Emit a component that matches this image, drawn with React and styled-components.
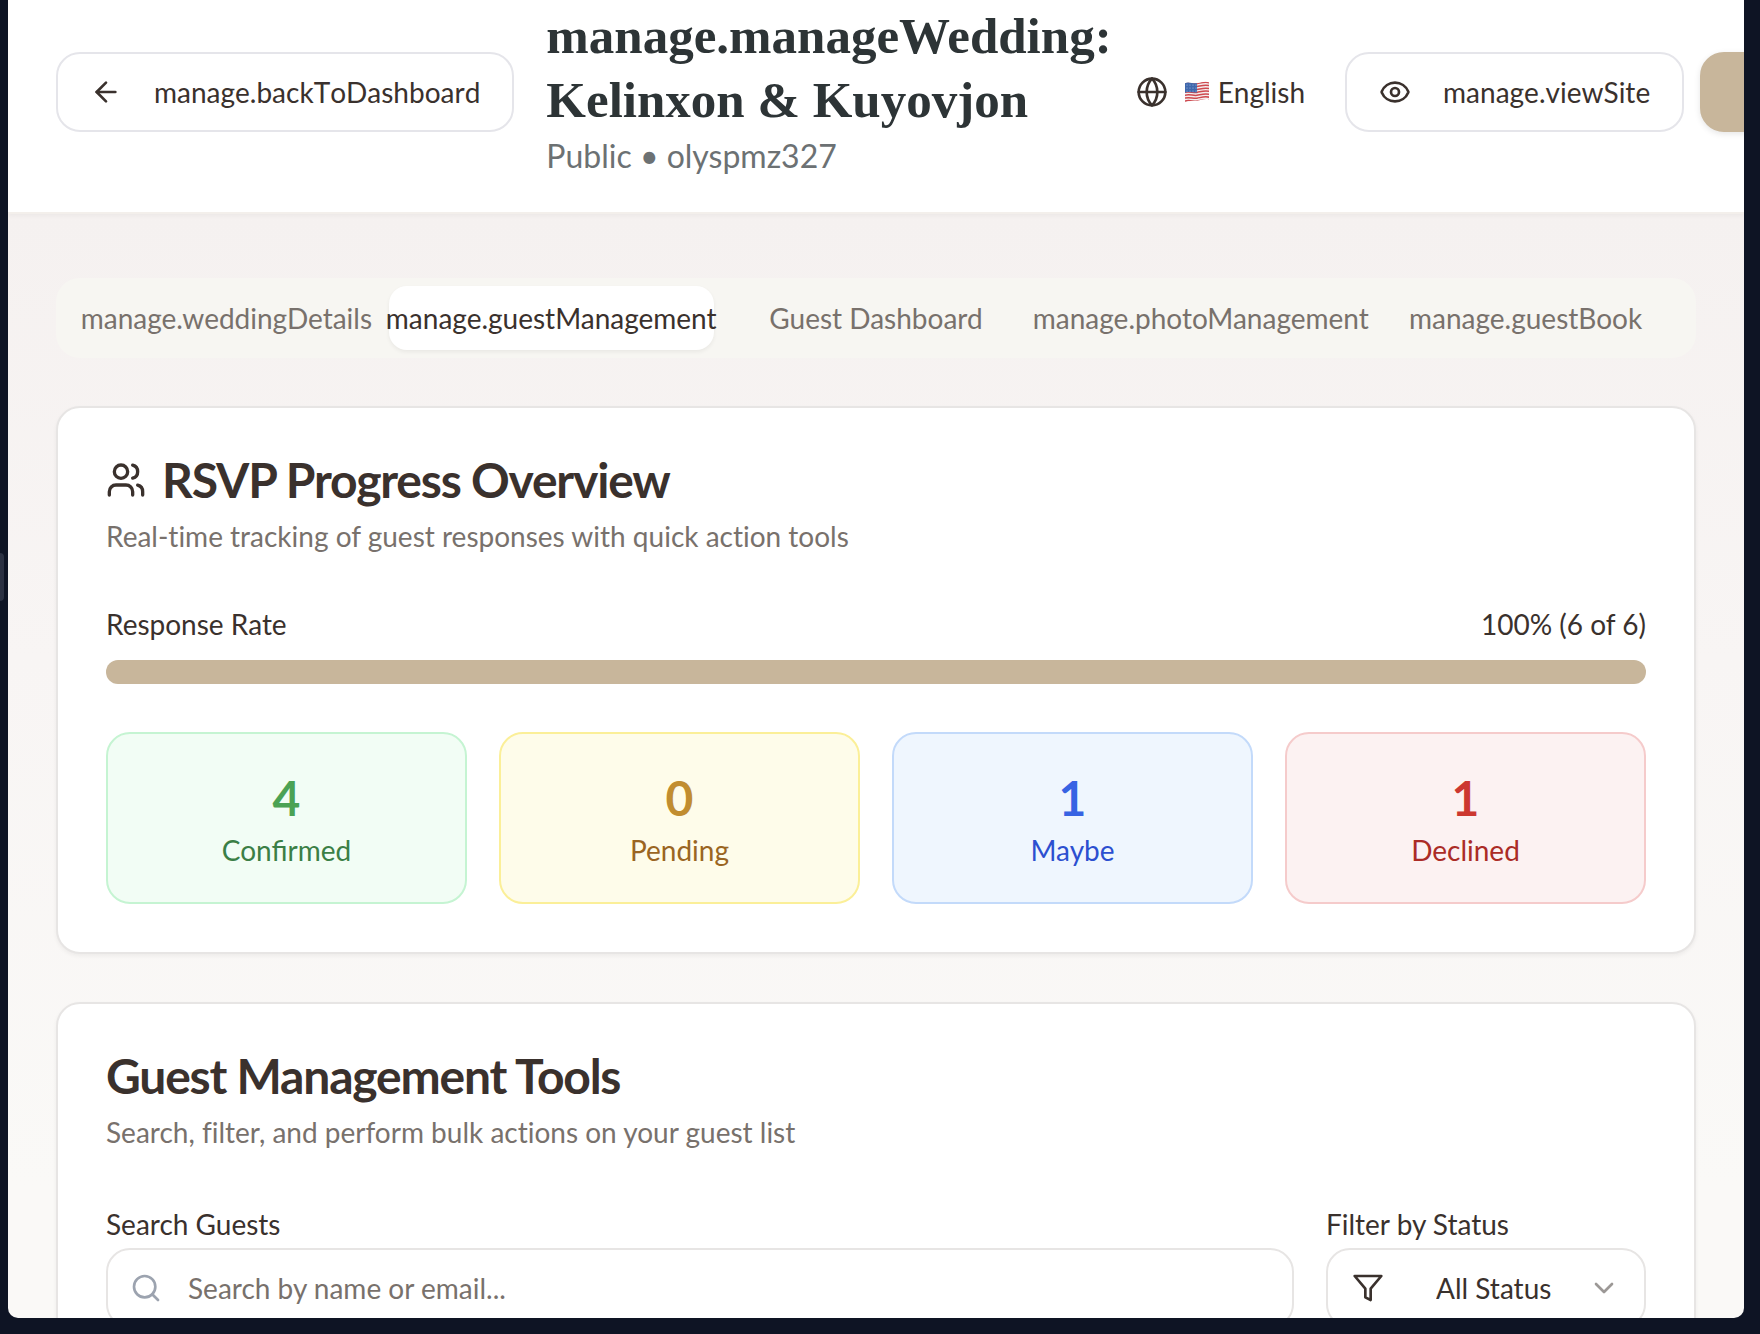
import React from "react";
import styled, { createGlobalStyle } from "styled-components";
import { ArrowLeft, ChevronDown, Eye, Globe, Search, Users } from "lucide-react";

const GlobalStyle = createGlobalStyle`
  *, *::before, *::after { box-sizing: border-box; }
  body {
    margin: 0;
    background: #0e1424;
    color: #3a312d;
    font-family: "Lato", sans-serif;
    font-size: 28px;
    line-height: 40px;
    -webkit-font-smoothing: antialiased;
  }
  h1, h2, p { margin: 0; }
  button, input, select { font: inherit; color: inherit; }
  svg { display: block; flex-shrink: 0; }
`;

const Desktop = styled.div`
  display: flex;
  align-items: center;
  height: 100vh;
  padding: 0 16px 16px 0;
  overflow: hidden;
`;

const PanelHandle = styled.div`
  width: 4px;
  height: 48px;
  margin: 0 4px 164px 0;
  flex-shrink: 0;
  border-radius: 0 4px 4px 0;
  background: #2b3142;
`;

const Viewport = styled.div`
  flex: 1;
  min-width: 0;
  height: 100%;
  overflow: hidden;
  border-radius: 0 0 10px 10px;
  background: linear-gradient(#f5f1f0 214px, #f8f5f4 50%, #faf9f7 90%);
`;

const Header = styled.header`
  display: flex;
  align-items: center;
  padding: 4px 48px 32px;
  background: #fff;
  border-bottom: 2px solid #f3efeb;
  box-shadow: 0 2px 4px rgba(0, 0, 0, 0.04);
`;

const Button = styled.button`
  display: inline-flex;
  align-items: center;
  flex-shrink: 0;
  gap: ${(p) => p.$gap || 32}px;
  height: 80px;
  padding: 0 ${(p) => (p.$ghost ? 24 : 32)}px;
  border: ${(p) => (p.$ghost ? "0" : "2px solid #e5e5ea")};
  border-radius: 24px;
  background: ${(p) => (p.$ghost ? "transparent" : "#fff")};
  white-space: nowrap;
  font-kerning: none;
`;

const PrimaryButton = styled(Button)`
  width: 240px;
  border-color: #c8b69b;
  background: #c8b69b;
  box-shadow: 0 2px 6px rgba(0, 0, 0, 0.1);
`;

const TitleBlock = styled.div`
  flex-shrink: 0;
  width: min-content;
  min-width: 565px;
  margin-left: 32px;
`;

const Title = styled.h1`
  font-family: "Liberation Serif", serif;
  font-size: 51px;
  font-weight: 700;
  line-height: 64px;
  color: #2d3436;
`;

const Subtitle = styled.p`
  font-size: 32px;
  line-height: 48px;
  color: #6c7173;
`;

const Actions = styled.div`
  display: flex;
  flex-shrink: 0;
  gap: 16px;
`;

const Language = styled.span`
  display: flex;
  align-items: center;
  gap: 8px;
`;

const Main = styled.main`
  display: grid;
  gap: 48px;
  padding: 64px 48px;
`;

const Tabs = styled.div`
  display: grid;
  grid-template-columns: repeat(5, minmax(0, 1fr));
  padding: 8px;
  border-radius: 24px;
  background: #f7f6f2;
`;

const Tab = styled.button`
  display: flex;
  align-items: center;
  justify-content: center;
  height: 64px;
  padding: 0;
  border: 0;
  border-radius: 18px;
  white-space: nowrap;
  color: ${(p) => (p.$active ? "#3a312d" : "#78716c")};
  background: ${(p) => (p.$active ? "#fff" : "transparent")};
  box-shadow: ${(p) => (p.$active ? "0 2px 4px rgba(0, 0, 0, 0.06)" : "none")};
`;

const Card = styled.section`
  padding: 48px;
  border: 2px solid #e7e5e4;
  border-radius: 24px;
  background: #fff;
  box-shadow: 0 2px 4px rgba(0, 0, 0, 0.05);
`;

const CardHeader = styled.div`
  display: grid;
  gap: 12px;
  padding-bottom: 48px;
`;

const CardTitle = styled.h2`
  display: flex;
  align-items: center;
  gap: 16px;
  font-size: 48px;
  font-weight: 700;
  line-height: 48px;
  letter-spacing: -0.025em;
`;

const Muted = styled.p`
  color: #78716c;
  font-variant-ligatures: no-common-ligatures;
`;

const RateRow = styled.div`
  display: flex;
  justify-content: space-between;
  margin-bottom: 16px;
`;

const Track = styled.div`
  height: 24px;
  border-radius: 12px;
  overflow: hidden;
  background: #f3efe9;
`;

const Fill = styled.div`
  height: 100%;
  background: #c8b69b;
`;

const Stats = styled.div`
  display: grid;
  grid-template-columns: repeat(4, 1fr);
  gap: 32px;
  margin-top: 48px;
`;

const Stat = styled.div`
  padding: 32px;
  border: 2px solid ${(p) => p.$border};
  border-radius: 24px;
  background: ${(p) => p.$bg};
  color: ${(p) => p.$label};
  text-align: center;
`;

const StatValue = styled.p`
  font-size: 48px;
  font-weight: 700;
  line-height: 64px;
  color: ${(p) => p.$color};
`;

const Filters = styled.div`
  display: flex;
  gap: 32px;
`;

const Field = styled.div`
  flex: ${(p) => (p.$wide ? "1" : "0 0 320px")};
`;

const Label = styled.label`
  display: block;
  line-height: 48px;
`;

const Control = styled.div`
  position: relative;
`;

const Adornment = styled.span`
  position: absolute;
  top: 24px;
  ${(p) => (p.$end ? "right" : "left")}: ${(p) => p.$inset || 26}px;
  color: ${(p) => p.$color || "inherit"};
  pointer-events: none;
`;

const TextInput = styled.input`
  display: block;
  width: 100%;
  height: 80px;
  padding: 0 24px 0 80px;
  border: 2px solid #e7e5e4;
  border-radius: 24px;
  background: #fff;
  &::placeholder { color: #78716c; opacity: 1; }
`;

const Select = styled.select`
  display: block;
  width: 100%;
  height: 80px;
  padding: 0 60px 0 108px;
  border: 2px solid #e7e5e4;
  border-radius: 24px;
  background: #fff;
  appearance: none;
`;

function UsFlag() {
  return (
    <svg width="26" height="24" viewBox="0 0 26 24" aria-hidden="true">
      <defs>
        <clipPath id="flag">
          <path d="M1 3.2C5 1.4 9 4 13 3.2S21 .8 25 2.2V19.4C21 18 17 20.2 13 20.8S5 20.4 1 22.4Z" />
        </clipPath>
      </defs>
      <g clipPath="url(#flag)">
        <rect width="26" height="24" fill="#f4eeee" />
        <g fill="none" stroke="#cf4a50" strokeWidth="1.5">
          {[0, 1, 2, 3, 4, 5, 6].map((i) => (
            <path key={i} transform={`translate(0 ${i * 2.9})`} d="M0 3.9C5 1.9 9 4.4 13 3.7S21 1.3 26 2.9" />
          ))}
        </g>
        <path d="M0 2.5C5 1 9 3.5 13 3V12.5C9 13 5 11 0 13Z" fill="#3f68ad" />
        <g fill="#b9cbe6">
          {[3, 6, 9, 12].map((x) => [5, 8, 11].map((y) => <circle key={`${x}-${y}`} cx={x} cy={y} r="0.5" />))}
        </g>
      </g>
    </svg>
  );
}

function FilterIcon() {
  return (
    <svg width="32" height="32" viewBox="0 0 24 24" fill="none" stroke="currentColor" strokeWidth="2" strokeLinecap="round" strokeLinejoin="round" aria-hidden="true">
      <polygon points="22 3 2 3 10 12.46 10 19 14 21 14 12.46 22 3" />
    </svg>
  );
}

const tabs = [
  "manage.weddingDetails",
  "manage.guestManagement",
  "Guest Dashboard",
  "manage.photoManagement",
  "manage.guestBook",
];

const stats = [
  { value: 4, label: "Confirmed", bg: "#f2fdf5", border: "#c5f4d2", color: "#4ba254", text: "#3b7f46" },
  { value: 0, label: "Pending", bg: "#fefcea", border: "#fbef98", color: "#c18d30", text: "#9a6522" },
  { value: 1, label: "Maybe", bg: "#eff6fe", border: "#c3dafa", color: "#3763e3", text: "#2c4fd0" },
  { value: 1, label: "Declined", bg: "#fcf2f2", border: "#f5cbcb", color: "#cc3830", text: "#ab2c26" },
];

export default function App() {
  const responded = 6;
  const invited = 6;
  const rate = Math.round((responded / invited) * 100);
  return (
    <>
      <GlobalStyle />
      <Desktop>
        <PanelHandle />
        <Viewport>
          <Header>
            <Button type="button">
              <ArrowLeft size={32} />
              manage.backToDashboard
            </Button>
            <TitleBlock>
              <Title>manage.manageWedding: Kelinxon &amp; Kuyovjon</Title>
              <Subtitle>Public • olyspmz327</Subtitle>
            </TitleBlock>
            <Actions>
              <Button type="button" $ghost $gap={16}>
                <Globe size={32} />
                <Language>
                  <UsFlag />
                  English
                </Language>
              </Button>
              <Button type="button">
                <Eye size={32} />
                manage.viewSite
              </Button>
              <PrimaryButton type="button" />
            </Actions>
          </Header>
          <Main>
            <Tabs role="tablist">
              {tabs.map((name, i) => (
                <Tab key={name} type="button" role="tab" aria-selected={i === 1} $active={i === 1}>
                  {name}
                </Tab>
              ))}
            </Tabs>
            <Card>
              <CardHeader>
                <CardTitle>
                  <Users size={40} />
                  RSVP Progress Overview
                </CardTitle>
                <Muted>Real-time tracking of guest responses with quick action tools</Muted>
              </CardHeader>
              <RateRow>
                <span>Response Rate</span>
                <span>{`${rate}% (${responded} of ${invited})`}</span>
              </RateRow>
              <Track role="progressbar" aria-valuenow={rate}>
                <Fill style={{ width: `${rate}%` }} />
              </Track>
              <Stats>
                {stats.map((s) => (
                  <Stat key={s.label} $bg={s.bg} $border={s.border} $label={s.text}>
                    <StatValue $color={s.color}>{s.value}</StatValue>
                    <p>{s.label}</p>
                  </Stat>
                ))}
              </Stats>
            </Card>
            <Card>
              <CardHeader>
                <CardTitle>Guest Management Tools</CardTitle>
                <Muted>Search, filter, and perform bulk actions on your guest list</Muted>
              </CardHeader>
              <Filters>
                <Field $wide>
                  <Label htmlFor="guest-search">Search Guests</Label>
                  <Control>
                    <TextInput id="guest-search" type="text" placeholder="Search by name or email..." />
                    <Adornment $inset={24} $color="#9ca3af">
                      <Search size={32} />
                    </Adornment>
                  </Control>
                </Field>
                <Field>
                  <Label htmlFor="status-filter">Filter by Status</Label>
                  <Control>
                    <Select id="status-filter" defaultValue="all">
                      <option value="all">All Status</option>
                    </Select>
                    <Adornment>
                      <FilterIcon />
                    </Adornment>
                    <Adornment $end $color="#9c9896">
                      <ChevronDown size={32} />
                    </Adornment>
                  </Control>
                </Field>
              </Filters>
            </Card>
          </Main>
        </Viewport>
      </Desktop>
    </>
  );
}
